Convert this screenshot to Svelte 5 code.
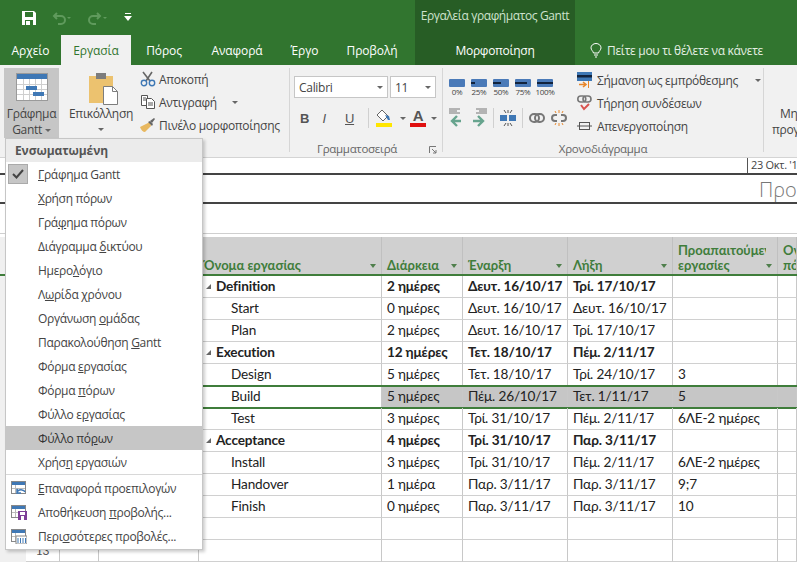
<script lang="ts">
	const tabs = ['Αρχείο', 'Εργασία', 'Πόρος', 'Αναφορά', 'Έργο', 'Προβολή'];

	// each label is split round its mnemonic letter: before, underlined, after
	const views = [
		['', 'Γ', 'ράφημα Gantt'],
		['', 'Χ', 'ρήση πόρων'],
		['Γρά', 'φ', 'ημα πόρων'],
		['Διάγραμμα ', 'δ', 'ικτύου'],
		['Ημερο', 'λ', 'όγιο'],
		['Λ', 'ω', 'ρίδα χρόνου'],
		['Οργάνωση ', 'ο', 'μάδας'],
		['Παρακολούθηση ', 'G', 'antt'],
		['Φόρμα ', 'ε', 'ργασίας'],
		['Φόρμα ', 'π', 'όρων'],
		['Φύλλο ε', 'ρ', 'γασίας'],
		['Φύλλο πό', 'ρ', 'ων'],
		['Χρήσ', 'η', ' εργασιών']
	];

	const actions = [
		{ kind: 'reset', parts: ['', 'Ε', 'παναφορά προεπιλογών'] },
		{ kind: 'save', parts: ['Αποθήκευση ', 'π', 'ροβολής...'] },
		{ kind: 'more', parts: ['Περι', 'σ', 'σότερες προβολές...'] }
	];

	const percents = [
		{ label: '0%', width: 0 },
		{ label: '25%', width: 4 },
		{ label: '50%', width: 8 },
		{ label: '75%', width: 12 },
		{ label: '100%', width: 16 }
	];

	const tasks = [
		{ name: 'Definition', dur: '2 ημέρες', start: 'Δευτ. 16/10/17', end: 'Τρί. 17/10/17', pre: '', sum: true },
		{ name: 'Start', dur: '0 ημέρες', start: 'Δευτ. 16/10/17', end: 'Δευτ. 16/10/17', pre: '' },
		{ name: 'Plan', dur: '2 ημέρες', start: 'Δευτ. 16/10/17', end: 'Τρί. 17/10/17', pre: '' },
		{ name: 'Execution', dur: '12 ημέρες', start: 'Τετ. 18/10/17', end: 'Πέμ. 2/11/17', pre: '', sum: true },
		{ name: 'Design', dur: '5 ημέρες', start: 'Τετ. 18/10/17', end: 'Τρί. 24/10/17', pre: '3' },
		{ name: 'Build', dur: '5 ημέρες', start: 'Πέμ. 26/10/17', end: 'Τετ. 1/11/17', pre: '5', sel: true },
		{ name: 'Test', dur: '3 ημέρες', start: 'Τρί. 31/10/17', end: 'Πέμ. 2/11/17', pre: '6ΛΕ-2 ημέρες' },
		{ name: 'Acceptance', dur: '4 ημέρες', start: 'Τρί. 31/10/17', end: 'Παρ. 3/11/17', pre: '', sum: true },
		{ name: 'Install', dur: '3 ημέρες', start: 'Τρί. 31/10/17', end: 'Πέμ. 2/11/17', pre: '6ΛΕ-2 ημέρες' },
		{ name: 'Handover', dur: '1 ημέρα', start: 'Παρ. 3/11/17', end: 'Παρ. 3/11/17', pre: '9;7' },
		{ name: 'Finish', dur: '0 ημέρες', start: 'Παρ. 3/11/17', end: 'Παρ. 3/11/17', pre: '10' },
		{ name: '', dur: '', start: '', end: '', pre: '' },
		{ name: '', dur: '', start: '', end: '', pre: '' }
	];
</script>

<div class="app">
	<header class="top">
		<div class="qat">
			<svg width="16" height="16" viewBox="0 0 16 16">
				<path d="M1 1h12l2 2v12H1z" fill="#fff" />
				<path d="M4 2h8v5H4zM4 10h8v5H4z" fill="#31752f" />
				<path d="M5 11h4v4H5z" fill="#fff" />
			</svg>
			<svg class="undo" width="20" height="14" viewBox="0 0 20 14">
				<path d="M5 2 2 5l3 3M2 5h7a4 4 0 0 1 0 8H6" fill="none" stroke="#5f9a5c" stroke-width="2" />
				<path d="M15 6h4l-2 2z" fill="#5f9a5c" />
			</svg>
			<svg class="redo" width="20" height="14" viewBox="0 0 20 14">
				<path d="M10 2l3 3-3 3M13 5H6a4 4 0 0 0 0 8h3" fill="none" stroke="#5f9a5c" stroke-width="2" />
				<path d="M16 6h4l-2 2z" fill="#5f9a5c" />
			</svg>
			<svg class="custom" width="8" height="9" viewBox="0 0 8 9">
				<path d="M1 0h6v1H1zM0 3h8L4 8z" fill="#fff" />
			</svg>
		</div>
		<div class="ctx ctx-title">Εργαλεία γραφήματος Gantt</div>
		<div></div>
		<nav class="tabs">
			{#each tabs as tab, i}
				<span class="tab" class:active={i === 1}>{tab}</span>
			{/each}
		</nav>
		<div class="ctx ctx-tab">Μορφοποίηση</div>
		<div class="tell">
			<svg width="12" height="15" viewBox="0 0 12 15">
				<path d="M3.500 10C3 8 1 7 1 4.800a5 4.300 0 0 1 10 0C11 7 9 8 8.500 10zM4 12h4M5 14h2" fill="none" stroke="#fff" />
			</svg>
			<span>Πείτε μου τι θέλετε να κάνετε</span>
		</div>
	</header>

	<section class="ribbon">
		<div class="group g-view">
			<div class="gantt-btn">
				<svg width="32" height="28" viewBox="0 0 32 28">
					<rect x="0.500" y="0.500" width="31" height="27" fill="#fff" stroke="#9a9a9a" />
					<rect x="1" y="1" width="30" height="5" fill="#3f78b5" />
					<path d="M7.500 6v21M1 11.500h30M1 16.500h30M1 21.500h30M13.500 6v21M19.500 6v21M25.500 6v21" stroke="#cfcfcf" fill="none" />
					<rect x="10" y="13" width="11" height="4" fill="#3f78b5" />
					<rect x="17" y="19" width="11" height="4" fill="#3f78b5" />
				</svg>
				<span>Γράφημα<br />Gantt <i class="caret"></i></span>
			</div>
		</div>

		<div class="group g-clip">
			<div class="paste">
				<svg width="30" height="32" viewBox="0 0 30 32">
					<rect x="0" y="3" width="24" height="27" fill="#ecc26f" />
					<rect x="7" y="0" width="10" height="6" fill="#7d7d7d" />
					<path d="M14.500 13.500h9l5 5v13h-14z" fill="#fff" stroke="#7d7d7d" />
					<path d="M23.500 13.500v5h5" fill="none" stroke="#7d7d7d" />
				</svg>
				<span>Επικόλληση</span>
				<i class="caret"></i>
			</div>
			<div class="clip-list">
				<div class="clip-item">
					<svg width="16" height="16" viewBox="0 0 16 16">
						<path d="M3 1l7 9M12 1 6 10" stroke="#666" stroke-width="1.600" fill="none" />
						<circle cx="4" cy="12" r="2.700" fill="none" stroke="#3f78b5" stroke-width="1.400" />
						<circle cx="12" cy="12" r="2.700" fill="none" stroke="#3f78b5" stroke-width="1.400" />
					</svg>
					<span>Αποκοπή</span>
				</div>
				<div class="clip-item">
					<svg width="16" height="16" viewBox="0 0 16 16">
						<path d="M1.500 1.500h6v10h-6z" fill="#fff" stroke="#555" />
						<path d="M6.500 4.500h5l3 3v7h-8z" fill="#fff" stroke="#555" />
						<path d="M3 4h3M3 6h3M8 9h5M8 11h5" stroke="#555" />
					</svg>
					<span>Αντιγραφή</span>
					<i class="caret wide"></i>
				</div>
				<div class="clip-item">
					<svg width="16" height="16" viewBox="0 0 16 16">
						<path d="M10 5 0 10c1 3 3 5 5 5l6-6z" fill="#e8b860" />
						<path d="m10 4 2 2 3-4-1-1z" fill="#666" />
						<path d="m8 5 4 4 1-2-3-3z" fill="#666" />
					</svg>
					<span>Πινέλο μορφοποίησης</span>
				</div>
			</div>
		</div>

		<div class="group g-font">
			<div class="combos">
				<div class="combo font-name">Calibri<i class="caret"></i></div>
				<div class="combo font-size">11<i class="caret"></i></div>
			</div>
			<div class="font-tools">
				<b class="tool">B</b>
				<em class="tool">I</em>
				<u class="tool">U</u>
				<span class="vsep"></span>
				<svg class="fill-ico" width="18" height="18" viewBox="0 0 18 18">
					<path d="m7 1 6 6-5 5-6-6z" fill="#fff" stroke="#666" />
					<path d="m10 6 4 1 1 4h-2z" fill="#3f78b5" />
					<rect x="1" y="14" width="16" height="4" fill="#ffe600" />
				</svg>
				<i class="caret"></i>
				<svg class="color-ico" width="16" height="18" viewBox="0 0 16 18">
					<text x="8" y="12" class="color-a">A</text>
					<rect y="14" width="16" height="4" fill="#e01010" />
				</svg>
				<i class="caret"></i>
			</div>
			<div class="group-label font-label">
				<span>Γραμματοσειρά</span>
				<svg class="launcher" width="8" height="8" viewBox="0 0 8 8">
					<path d="M0.500 7V0.500H7M3 3l4 4M7 4v3H4" fill="none" stroke="#777" />
				</svg>
			</div>
		</div>

		<div class="group g-sched">
			<div class="sched-left">
				<div class="percents">
					{#each percents as p}
						<div class="pct">
							<svg width="16" height="8" viewBox="0 0 16 8">
								<rect width="16" height="8" rx="1" fill="#4a7ab8" />
								<rect y="3" width={p.width} height="2" fill="#12233d" />
							</svg>
							<small>{p.label}</small>
						</div>
					{/each}
				</div>
				<div class="sched-tools">
					<svg width="16" height="20" viewBox="0 0 16 20">
						<path d="M0 1h11M0 3h8M0 5h11" stroke="#777" />
						<path d="M12 13H4M8 8l-5 5 5 5" fill="none" stroke="#67a48e" stroke-width="2.400" />
					</svg>
					<svg width="16" height="20" viewBox="0 0 16 20">
						<path d="M5 1h11M8 3h8M5 5h11" stroke="#777" />
						<path d="M2 13h9M7 8l5 5-5 5" fill="none" stroke="#67a48e" stroke-width="2.400" />
					</svg>
					<span class="vsep"></span>
					<svg width="16" height="16" viewBox="0 0 16 16">
						<rect y="5" width="7" height="6" fill="#3f78b5" />
						<rect x="9" y="5" width="7" height="6" fill="#3f78b5" />
						<path d="M4 0l2 3M12 0l-2 3M4 16l2-3M12 16l-2-3M8 0v3M8 13v3" stroke="#555" />
					</svg>
					<span class="vsep"></span>
					<svg width="16" height="10" viewBox="0 0 16 10">
						<rect x="1" y="1" width="9" height="8" rx="4" fill="none" stroke="#777" stroke-width="2" />
						<rect x="6" y="1" width="9" height="8" rx="4" fill="none" stroke="#777" stroke-width="2" />
					</svg>
					<svg width="16" height="16" viewBox="0 0 16 16">
						<path d="M6 5H4a3 3 0 0 0 0 6h2M10 5h2a3 3 0 0 1 0 6h-2" fill="none" stroke="#777" stroke-width="2" />
						<path d="M8 0v3M8 13v3M4 1l1 2M12 1l-1 2M4 15l1-2M12 15l-1-2" stroke="#e98a2f" />
					</svg>
				</div>
			</div>
			<div class="sched-right">
				<div class="sched-item">
					<svg width="15" height="16" viewBox="0 0 15 16">
						<rect width="15" height="9" fill="#3f78b5" />
						<rect y="3" width="15" height="2.500" fill="#12233d" />
						<path d="M2 12.500h6M6 10l3 2.500L6 15" fill="none" stroke="#e8862a" stroke-width="1.600" />
						<path d="M11.500 9v7" stroke="#e8862a" />
					</svg>
					<span>Σήμανση ως εμπρόθεσμης</span>
					<i class="caret wide"></i>
				</div>
				<div class="sched-item">
					<svg width="15" height="16" viewBox="0 0 15 16">
						<rect x="0.800" y="1" width="8" height="6" rx="3" fill="none" stroke="#777" stroke-width="1.600" />
						<rect x="6" y="1" width="8" height="6" rx="3" fill="none" stroke="#777" stroke-width="1.600" />
						<path d="m4 10 3 4 5-5" fill="none" stroke="#d9534f" stroke-width="2" />
					</svg>
					<span>Τήρηση συνδέσεων</span>
				</div>
				<div class="sched-item">
					<svg width="15" height="16" viewBox="0 0 15 16">
						<rect x="2.500" y="4.500" width="10" height="7" fill="none" stroke="#555" />
						<path d="M0 8h15" stroke="#555" />
					</svg>
					<span>Απενεργοποίηση</span>
				</div>
			</div>
			<div class="group-label">Χρονοδιάγραμμα</div>
		</div>

		<div class="group g-next"><span class="next-top">Μη</span><span>προγ</span></div>
	</section>

	<div class="timescale"><span>23 Οκτ. '17</span></div>
	<div class="timeline-title">Προσ</div>
	<div class="spacer"></div>

	<div class="sheet">
		<div class="row head">
			<div class="strip"></div>
			<div class="cell"></div>
			<div class="cell"></div>
			<div class="cell"></div>
			<div class="cell"><span>Όνομα εργασίας</span><i class="arrow"></i></div>
			<div class="cell"><span>Διάρκεια</span><i class="arrow"></i></div>
			<div class="cell"><span>Έναρξη</span><i class="arrow"></i></div>
			<div class="cell"><span>Λήξη</span><i class="arrow"></i></div>
			<div class="cell"><span class="clipped">Προαπαιτούμενες<br />εργασίες</span><i class="arrow"></i></div>
			<div class="cell"><span>Ονόματα<br />πόρων</span></div>
		</div>
		{#each tasks as task, i}
			<div class="row body" class:sum={task.sum} class:sel={task.sel}>
				<div class="strip"></div>
				<div class="cell num">{i + 1}</div>
				<div class="cell"></div>
				<div class="cell"></div>
				<div class="cell name" class:child={!task.sum}>
					{#if task.sum}<i class="fold"></i>{/if}{task.name}
				</div>
				<div class="cell picked">{task.dur}</div>
				<div class="cell picked">{task.start}</div>
				<div class="cell picked">{task.end}</div>
				<div class="cell picked">{task.pre}</div>
				<div class="cell picked"></div>
			</div>
		{/each}
	</div>

	<div class="menu">
		<div class="menu-head">Ενσωματωμένη</div>
		{#each views as v, i}
			<div class="menu-item" class:hover={i === 11}>
				{#if i === 0}
					<span class="check">
						<svg width="12" height="10" viewBox="0 0 12 10">
							<path d="m1 5 3.500 3.500L11 1" fill="none" stroke="#444" stroke-width="2" />
						</svg>
					</span>
				{/if}
				<span class="label">{v[0]}<u>{v[1]}</u>{v[2]}</span>
			</div>
		{/each}
		<div class="menu-sep"></div>
		{#each actions as a}
			<div class="menu-item">
				<svg class="act-ico" width="16" height="16" viewBox="0 0 16 16">
					<rect x="0.500" y="1.500" width="14" height="12" fill="#fff" stroke="#888" />
					<rect x="1" y="2" width="13" height="3" fill="#3f78b5" />
					<path d="M4.500 5v8M1 8.500h13" stroke="#bbb" />
					{#if a.kind === 'reset'}
						<path d="M14 12a4 3 0 0 0-7-1l-1-2v4h4" fill="none" stroke="#3f78b5" stroke-width="1.500" />
					{:else if a.kind === 'save'}
						<rect x="7" y="7" width="9" height="9" fill="#7e3f98" />
						<rect x="9" y="8" width="5" height="3" fill="#fff" />
						<rect x="10" y="12" width="3" height="4" fill="#fff" />
					{:else}
						<rect x="5" y="8" width="11" height="8" fill="#fff" stroke="#888" />
						<path d="M7 10v5M9.500 10v5M12 10v5M14.500 10v5" stroke="#3f78b5" />
					{/if}
				</svg>
				<span class="label">{a.parts[0]}<u>{a.parts[1]}</u>{a.parts[2]}</span>
			</div>
		{/each}
	</div>
</div>

<style>
	:global(body) {
		margin: 0;
		background: #fff;
	}

	.app {
		position: relative;
		width: 797px;
		height: 563px;
		overflow: hidden;
		display: flex;
		flex-direction: column;
		font-family: 'Open Sans', 'Noto Sans', sans-serif;
		font-size: 12px;
		letter-spacing: -0.3px;
		color: #444;
	}

	.top {
		display: grid;
		grid-template-columns: 415px 160px 1fr;
		grid-template-rows: 35px 30px;
		background: #31752f;
		color: #fff;
		flex: none;
	}

	.qat {
		display: flex;
		align-items: center;
		padding-left: 21px;
	}

	.undo {
		margin-left: 15px;
	}

	.redo {
		margin-left: 15px;
	}

	.custom {
		margin-left: 17px;
	}

	.ctx {
		background: #275d25;
		display: flex;
		align-items: center;
		justify-content: center;
	}

	.ctx-title {
		color: #cfe3ce;
		font-size: 12px;
		letter-spacing: -0.4px;
		padding-bottom: 4px;
	}

	.tabs {
		display: grid;
		grid-template-columns: 61px 70px 66px 80px 55px 80px;
	}

	.tab {
		display: flex;
		align-items: center;
		justify-content: center;
		padding-top: 1px;
		letter-spacing: -0.1px;
	}

	.tab.active {
		background: #f1f1f1;
		color: #31752f;
	}

	.tell {
		display: flex;
		align-items: center;
		gap: 5px;
		padding-left: 15px;
		color: #e4efe3;
	}

	.ribbon {
		height: 93px;
		flex: none;
		display: flex;
		background: #f1f1f1;
		border-bottom: 1px solid #d4d4d4;
		box-sizing: border-box;
	}

	.group {
		position: relative;
		height: 84px;
		margin-top: 3px;
		box-sizing: border-box;
		border-right: 1px solid #d6d6d6;
	}

	.group-label {
		position: absolute;
		bottom: -4px;
		left: 0;
		right: 0;
		text-align: center;
		color: #666;
		font-size: 11.500px;
	}

	.font-label {
		padding-right: 18px;
	}

	.g-view {
		width: 63px;
		padding-left: 4px;
		border-right: 0;
	}

	.gantt-btn {
		width: 55px;
		height: 70px;
		background: #c6c6c6;
		display: flex;
		flex-direction: column;
		align-items: center;
		padding-top: 5px;
		box-sizing: border-box;
		text-align: center;
		line-height: 16px;
		gap: 5px;
	}

	.caret {
		display: inline-block;
		width: 0;
		height: 0;
		border: 3px solid transparent;
		border-top: 3.500px solid #666;
		border-bottom: 0;
		vertical-align: middle;
	}

	.caret.wide {
		margin-left: 12px;
	}

	.g-clip {
		width: 227px;
		display: flex;
		padding-left: 3px;
	}

	.paste {
		width: 70px;
		display: flex;
		flex-direction: column;
		align-items: center;
		padding-top: 5px;
		box-sizing: border-box;
	}

	.paste svg {
		margin-left: 6px;
	}

	.paste span {
		margin-top: 0;
	}

	.paste .caret {
		margin-top: 6px;
	}

	.clip-list {
		display: flex;
		flex-direction: column;
		padding: 3px 0 0 4px;
		gap: 7px;
	}

	.clip-item,
	.sched-item {
		display: flex;
		align-items: center;
		gap: 3px;
		height: 16px;
		white-space: nowrap;
	}

	.sched-item {
		gap: 5px;
	}

	.g-font {
		width: 153px;
		padding: 8px 0 0 4px;
	}

	.combos {
		display: flex;
		gap: 2px;
	}

	.combo {
		height: 22px;
		box-sizing: border-box;
		background: #fff;
		border: 1px solid #c6c6c6;
		display: flex;
		align-items: center;
		justify-content: space-between;
		padding: 0 4px;
	}

	.font-name {
		width: 94px;
	}

	.font-size {
		width: 46px;
	}

	.font-tools {
		display: flex;
		align-items: center;
		margin-top: 10px;
		height: 20px;
		padding-left: 6px;
	}

	.tool {
		width: 22.500px;
		font-family: 'Liberation Sans', sans-serif;
		font-size: 13px;
		color: #555;
	}

	.vsep {
		width: 1px;
		height: 20px;
		background: #d0d0d0;
	}

	.font-tools .vsep {
		margin: 0 6px 0 0;
	}

	.fill-ico {
		margin-right: 7px;
	}

	.color-ico {
		margin: 0 5px 0 4px;
	}

	.color-a {
		font-family: 'Liberation Sans', sans-serif;
		font-size: 15px;
		font-weight: 700;
		fill: #555;
		text-anchor: middle;
	}

	.launcher {
		position: absolute;
		right: 5px;
		top: 5px;
	}

	.g-sched {
		width: 321px;
		display: flex;
		padding-left: 6px;
	}

	.sched-left {
		width: 128px;
		padding-top: 11px;
	}

	.percents {
		display: flex;
		gap: 6px;
	}

	.pct {
		width: 16px;
		display: flex;
		flex-direction: column;
		align-items: center;
	}

	.pct small {
		font-size: 8px;
		line-height: 10px;
		margin-top: 0;
		white-space: nowrap;
	}

	.sched-tools {
		display: flex;
		align-items: center;
		gap: 6px;
		margin-top: 11px;
		height: 20px;
	}

	.sched-right {
		display: flex;
		flex-direction: column;
		gap: 7px;
		padding-top: 4px;
	}

	.g-next {
		flex: 1;
		border: 0;
		padding: 38px 0 0 8px;
		line-height: 16px;
		white-space: nowrap;
		overflow: hidden;
		display: flex;
		flex-direction: column;
	}

	.next-top {
		padding-left: 8px;
	}

	.timescale {
		height: 17px;
		box-sizing: border-box;
		flex: none;
		border-bottom: 2px solid #444;
		padding-left: 747px;
		overflow: hidden;
		white-space: nowrap;
		font-size: 11px;
		line-height: 13px;
	}

	.timescale span {
		display: block;
		border-left: 1px solid #555;
		padding-left: 3px;
		height: 15px;
	}

	.timeline-title {
		height: 29px;
		box-sizing: border-box;
		flex: none;
		border-bottom: 2px solid #444;
		padding-left: 759px;
		font-size: 20px;
		line-height: 30px;
		font-weight: 300;
		letter-spacing: 0;
		color: #777;
		white-space: nowrap;
		overflow: hidden;
	}

	.spacer {
		height: 29px;
		flex: none;
	}

	.sheet {
		flex: 1;
		border-top: 1px solid #cfcfcf;
		padding-top: 3px;
		font-family: Lato, 'Open Sans', sans-serif;
		font-size: 13.600px;
		letter-spacing: -0.15px;
		color: #222;
	}

	.row {
		display: grid;
		grid-template-columns: 26px 34px 39px 100px 183px 81px 105px 105px 105px 19px;
		box-sizing: border-box;
		position: relative;
	}

	.head {
		height: 39px;
		background: #d0d0d0;
		border-bottom: 2px solid #3f7d3b;
		color: #3f7d3b;
		font-size: 13px;
		letter-spacing: 0;
		font-weight: 700;
		line-height: 15px;
	}

	.body {
		height: 22px;
		line-height: 21px;
	}

	.strip {
		background: #f0f0f0;
	}

	.cell {
		box-sizing: border-box;
		border-right: 1px solid #c8c8c8;
		padding-left: 5px;
		overflow: hidden;
		white-space: nowrap;
		position: relative;
	}

	.head .cell {
		border-right-color: #c0c0c0;
		display: flex;
		align-items: flex-end;
		padding-bottom: 1px;
	}

	.clipped {
		width: 88px;
		overflow: hidden;
	}

	.body .cell {
		border-bottom: 1px solid #d0d0d0;
	}

	.arrow {
		position: absolute;
		right: 5px;
		bottom: 6px;
		width: 0;
		height: 0;
		border: 3.500px solid transparent;
		border-top: 4px solid #4f7f4c;
		border-bottom: 0;
	}

	.num {
		text-align: center;
		padding: 0;
		color: #555;
		font-size: 12px;
	}

	.sum {
		font-weight: 700;
	}

	.name.child {
		padding-left: 32px;
	}

	.name {
		padding-left: 7px;
		display: flex;
		align-items: center;
		gap: 5px;
	}

	.fold {
		width: 0;
		height: 0;
		border-style: solid;
		border-width: 0 0 5px 5px;
		border-color: transparent transparent #666 transparent;
	}

	.sel .picked {
		background: #c6c6c6;
	}

	.sel::after {
		content: '';
		position: absolute;
		left: 60px;
		right: 0;
		top: -1px;
		bottom: -1px;
		border-top: 2px solid #3f7d3b;
		border-bottom: 2px solid #3f7d3b;
		pointer-events: none;
	}

	.menu {
		position: absolute;
		left: 5px;
		top: 138px;
		width: 198px;
		box-sizing: border-box;
		background: #fff;
		border: 1px solid #c6c6c6;
		box-shadow: 2px 2px 3px rgba(0, 0, 0, 0.2);
		padding-bottom: 1px;
	}

	.menu-head {
		height: 23px;
		background: #ebebeb;
		padding-left: 9px;
		line-height: 23px;
		font-weight: 700;
		letter-spacing: -0.1px;
		color: #555;
	}

	.menu-item {
		height: 24px;
		position: relative;
		display: flex;
		align-items: center;
		padding-left: 32px;
	}

	.menu-item.hover {
		background: #c6c6c6;
		color: #333;
	}

	.menu-sep {
		height: 1px;
		background: #d8d8d8;
		margin: 0 0 1px;
	}

	.check {
		position: absolute;
		left: 2px;
		top: 2px;
		width: 20px;
		height: 20px;
		box-sizing: border-box;
		background: #c6c6c6;
		border: 1px solid #aaa;
		display: flex;
		align-items: center;
		justify-content: center;
	}

	.act-ico {
		position: absolute;
		left: 5px;
		top: 4px;
	}
</style>
